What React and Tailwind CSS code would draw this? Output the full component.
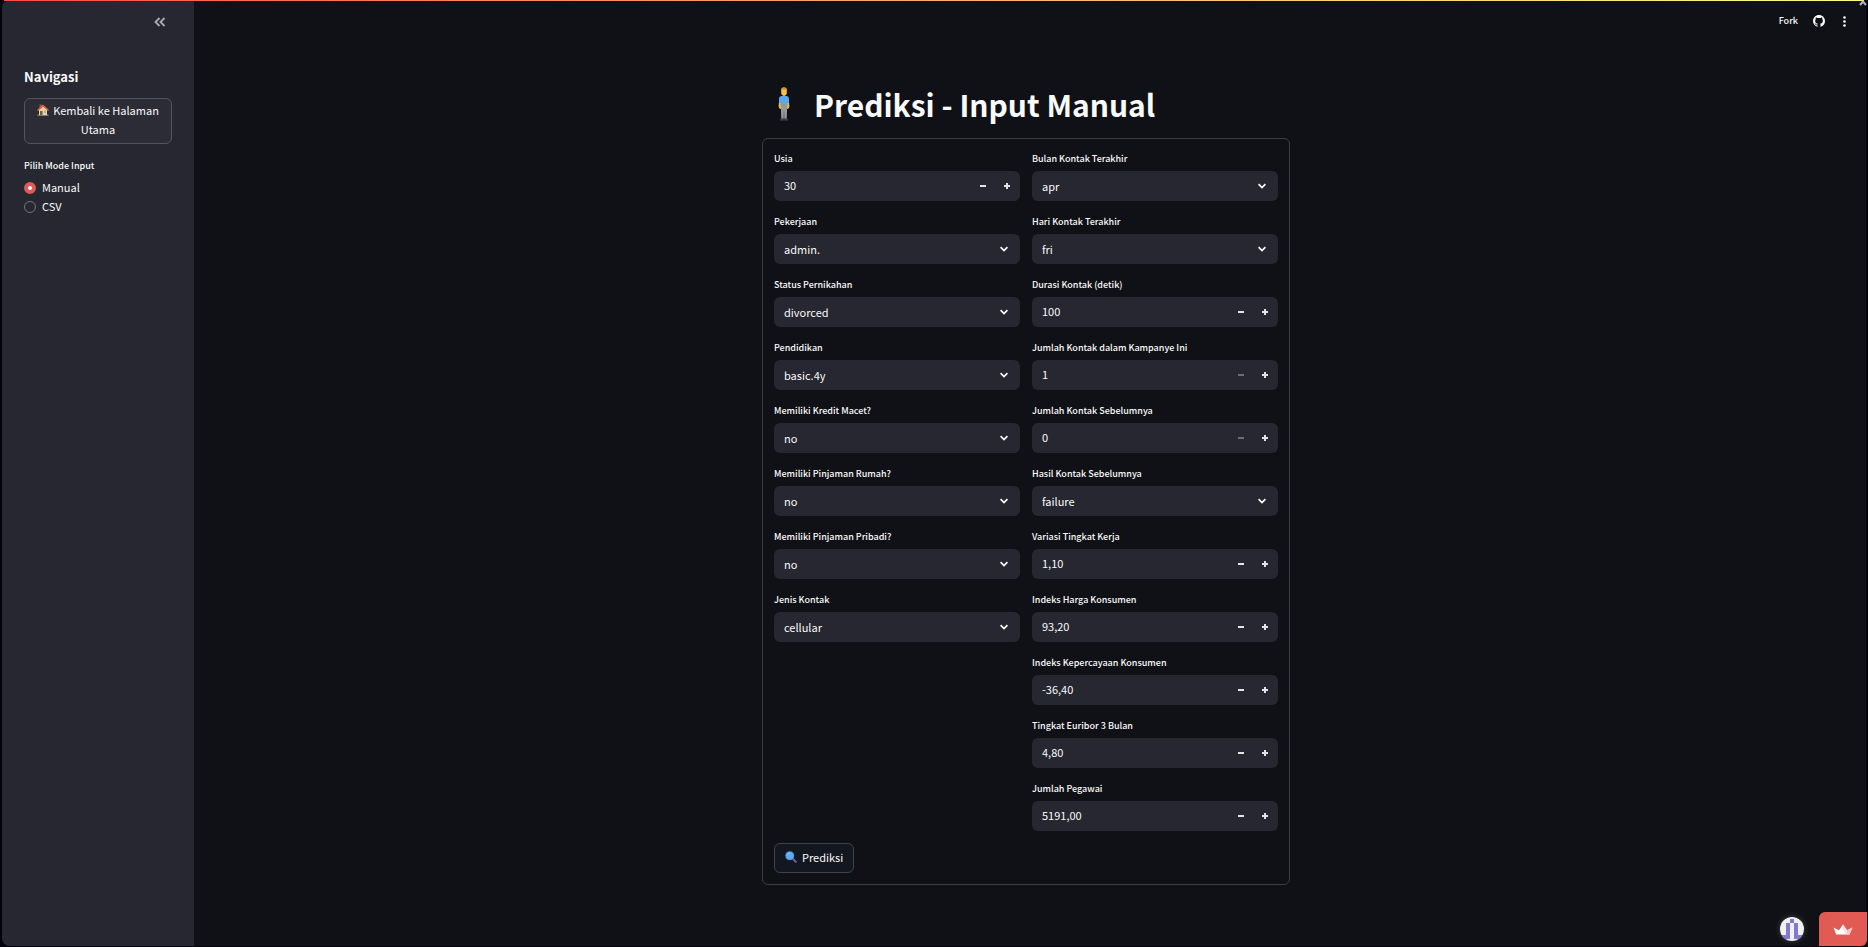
import { useState } from "react";

const leftFields = [
  { id: "usia", label: "Usia", type: "number", value: "30" },
  { id: "pekerjaan", label: "Pekerjaan", type: "select", value: "admin." },
  { id: "status", label: "Status Pernikahan", type: "select", value: "divorced" },
  { id: "pendidikan", label: "Pendidikan", type: "select", value: "basic.4y" },
  { id: "kredit", label: "Memiliki Kredit Macet?", type: "select", value: "no" },
  { id: "rumah", label: "Memiliki Pinjaman Rumah?", type: "select", value: "no" },
  { id: "pribadi", label: "Memiliki Pinjaman Pribadi?", type: "select", value: "no" },
  { id: "jenis", label: "Jenis Kontak", type: "select", value: "cellular" },
];

const rightFields = [
  { id: "bulan", label: "Bulan Kontak Terakhir", type: "select", value: "apr" },
  { id: "hari", label: "Hari Kontak Terakhir", type: "select", value: "fri" },
  { id: "durasi", label: "Durasi Kontak (detik)", type: "number", value: "100" },
  { id: "kampanye", label: "Jumlah Kontak dalam Kampanye Ini", type: "number", value: "1", atMin: true },
  { id: "sebelumnya", label: "Jumlah Kontak Sebelumnya", type: "number", value: "0", atMin: true },
  { id: "hasil", label: "Hasil Kontak Sebelumnya", type: "select", value: "failure" },
  { id: "variasi", label: "Variasi Tingkat Kerja", type: "number", value: "1,10" },
  { id: "harga", label: "Indeks Harga Konsumen", type: "number", value: "93,20" },
  { id: "kepercayaan", label: "Indeks Kepercayaan Konsumen", type: "number", value: "-36,40" },
  { id: "euribor", label: "Tingkat Euribor 3 Bulan", type: "number", value: "4,80" },
  { id: "pegawai", label: "Jumlah Pegawai", type: "number", value: "5191,00" },
];

function HouseIcon() {
  return (
    <svg viewBox="0 0 24 24" className="mr-1 inline-block size-3 align-[-1px]" aria-hidden="true">
      <path d="M1 21h22v3H1z" fill="#4a9a68" />
      <path d="M4 11 12 4l8 7v11H4z" fill="#f2cfa0" />
      <path d="M5 1h4v8H5z" fill="#a35a45" />
      <path d="M12 1 24 12l-2 2L12 5 2 14l-2-2z" fill="#d8683a" />
      <path d="M6 14h5v8H6z" fill="#8a5040" />
      <path d="M14 13h4v5h-4z" fill="#7fb8e6" />
    </svg>
  );
}

function PersonIcon() {
  return (
    <svg viewBox="0 0 12 34" className="h-[34px] w-3" aria-hidden="true">
      <path d="M1 14h2v8H2L.6 20zM9 14h2l.4 6-1.4 2H9z" fill="#efb93e" />
      <path d="M3.2 3.2C3.2 1.200 4.400.5 6 .5s2.800.7 2.800 2.700V6C8.800 7.600 7.500 8.600 6 8.600S3.200 7.600 3.200 6z" fill="#f3c04a" />
      <path d="M3.100 3.600C2.900 1.300 4.300.3 6 .3s3.100 1 2.900 3.300L8 2.600H4z" fill="#c98f2c" />
      <path d="M5 8h2v2H5z" fill="#e0a838" />
      <path d="M3.600 9h4.800c1.600 0 2.600 1 2.600 3v4H9.300v2H2.700v-2H1v-4c0-2 1-3 2.600-3z" fill="#5ba7ea" />
      <path d="M2.800 17.500h6.400L8.700 32H6.300L6 22l-.3 10H3.300z" fill="#98989e" />
      <path d="M5.700 31.500V33.500H2V32.600l1.300-1.100zM6.300 31.500V33.500H10V32.600l-1.300-1.100z" fill="#4b3a63" />
    </svg>
  );
}

function SearchIcon() {
  return (
    <svg viewBox="0 0 24 24" className="size-3" aria-hidden="true">
      <path d="m15 15 6.500 6.500" stroke="#6c5a9c" strokeWidth="4.500" strokeLinecap="round" />
      <circle cx="9.500" cy="9.500" r="9" fill="#4a86d0" />
      <circle cx="9.500" cy="9.500" r="7.500" fill="#5caaf0" />
      <path d="M5 8c.5-2 2-3.300 4-3.500" stroke="#a5d4fb" strokeWidth="1.500" fill="none" strokeLinecap="round" />
    </svg>
  );
}

function Chevron() {
  return (
    <svg viewBox="0 0 8 6" className="pointer-events-none col-start-1 row-start-1 mr-3 h-[6px] w-2 self-center justify-self-end" fill="none" aria-hidden="true">
      <path d="m.6 1.100 3.400 3.400 3.400-3.400" stroke="#fafafa" strokeWidth="1.700" />
    </svg>
  );
}

function SelectField({ field }) {
  return (
    <div className="grid h-[30px] rounded-md bg-[#262730]">
      <select
        id={field.id}
        defaultValue={field.value}
        className="col-start-1 row-start-1 w-full appearance-none rounded-md bg-transparent px-[10px] pb-px text-[11px] leading-[18px] outline-none"
      >
        <option>{field.value}</option>
      </select>
      <Chevron />
    </div>
  );
}

function NumberField({ field }) {
  return (
    <div className="flex h-[30px] overflow-hidden rounded-md bg-[#262730] pr-px">
      <input
        id={field.id}
        type="text"
        inputMode="decimal"
        defaultValue={field.value}
        className="min-w-0 flex-1 bg-transparent px-[10px] pb-[3px] text-[11px] leading-[18px] outline-none"
      />
      <button
        type="button"
        aria-label={"Kurangi " + field.label}
        disabled={field.atMin}
        className="flex w-6 items-center justify-center text-[#e4e4e6] disabled:text-[#6b6c76]"
      >
        <svg viewBox="0 0 6 6" className="size-[6px]" aria-hidden="true">
          <path d="M0 2h6v2H0z" fill="currentColor" />
        </svg>
      </button>
      <button
        type="button"
        aria-label={"Tambah " + field.label}
        className="flex w-6 items-center justify-center text-[#e4e4e6]"
      >
        <svg viewBox="0 0 6 6" className="size-[6px]" aria-hidden="true">
          <path d="M0 2h2V0h2v2h2v2H4v2H2V4H0z" fill="currentColor" />
        </svg>
      </button>
    </div>
  );
}

function Field({ field }) {
  return (
    <div className="flex flex-col">
      <label htmlFor={field.id} className="mb-[3px] h-[18px] text-[9px] leading-[17px] font-medium">
        {field.label}
      </label>
      {field.type === "select" ? <SelectField field={field} /> : <NumberField field={field} />}
    </div>
  );
}

function Sidebar() {
  const [mode, setMode] = useState("Manual");
  return (
    <aside className="flex w-48 shrink-0 flex-col rounded-l-lg bg-[#262730] px-[22px]">
      <div className="flex h-[66px] justify-end pt-4 pr-[6px]">
        <button type="button" aria-label="Tutup sidebar" className="flex h-3 w-3 items-center justify-center">
          <svg viewBox="0 0 12 10" className="h-[10px] w-3" fill="none" aria-hidden="true">
            <path d="M5.500 1 1.500 5l4 4M10.500 1l-4 4 4 4" stroke="#a9aab2" strokeWidth="1.800" />
          </svg>
        </button>
      </div>
      <h2 className="text-[13px] leading-[22px] font-bold">Navigasi</h2>
      <button
        type="button"
        className="mt-[10px] rounded-md border border-[#53545d] bg-[#2b2c36] px-2 pt-[2px] pb-1 text-[11px] leading-[19px]"
      >
        <HouseIcon />
        Kembali ke Halaman Utama
      </button>
      <fieldset className="mt-[14px]">
        <legend className="mb-[5px] text-[9px] leading-[15px] font-medium">Pilih Mode Input</legend>
        {["Manual", "CSV"].map((name) => (
          <label key={name} className="flex h-[19px] items-center gap-[6px] text-[11px] leading-[19px]">
            <input
              type="radio"
              name="mode"
              checked={mode === name}
              onChange={() => setMode(name)}
              className="size-3 appearance-none rounded-full border border-[#73747c] checked:border-4 checked:border-[#e25a54] checked:bg-white"
            />
            {name}
          </label>
        ))}
      </fieldset>
    </aside>
  );
}

function Header() {
  return (
    <header className="flex h-[42px] items-center justify-end self-stretch pr-[19px]">
      <a href="#fork" className="text-[9px] leading-[16px] font-medium">Fork</a>
      <a href="#github" aria-label="GitHub" className="ml-[15px]">
        <svg viewBox="0 0 16 16" className="size-3" fill="#fafafa" aria-hidden="true">
          <path d="M8 0C3.580 0 0 3.580 0 8c0 3.540 2.290 6.530 5.470 7.590.4.070.55-.17.55-.38 0-.19-.01-.82-.01-1.490-2.010.37-2.530-.49-2.690-.94-.09-.23-.48-.94-.82-1.130-.28-.15-.68-.52-.01-.53.63-.01 1.080.58 1.230.82.72 1.210 1.870.87 2.330.66.070-.52.28-.87.51-1.070-1.780-.2-3.640-.89-3.640-3.950 0-.87.31-1.590.82-2.150-.08-.2-.36-1.020.08-2.120 0 0 .67-.21 2.200.82.64-.18 1.320-.27 2-.27s1.360.09 2 .27c1.530-1.040 2.200-.82 2.200-.82.44 1.100.16 1.920.08 2.120.51.56.82 1.270.82 2.150 0 3.070-1.870 3.750-3.650 3.950.29.25.54.73.54 1.480 0 1.070-.01 1.930-.01 2.200 0 .21.15.46.55.38A8.010 8.010 0 0 0 16 8c0-4.420-3.580-8-8-8z" />
        </svg>
      </a>
      <button type="button" aria-label="Menu" className="ml-4 flex w-[6px] justify-center">
        <svg viewBox="0 0 3 11" className="h-[11px] w-[3px]" fill="#fafafa" aria-hidden="true">
          <circle cx="1.500" cy="1.500" r="1.300" />
          <circle cx="1.500" cy="5.500" r="1.300" />
          <circle cx="1.500" cy="9.500" r="1.300" />
        </svg>
      </button>
    </header>
  );
}

function HostBadges() {
  return (
    <div className="fixed right-px bottom-px flex items-center gap-[15px]">
      <a href="#profil" aria-label="Profil pembuat" className="rounded-full shadow-[0_0_6px_rgba(255,255,255,0.2)]">
        <svg viewBox="0 0 24 24" className="size-6 rounded-full" aria-hidden="true">
          <path d="M0 0h24v24H0z" fill="#f0f0f0" />
          <path d="M10 2h4v4h4v12h4v4h-8V6h-4v16H2v-4h4V6h4z" fill="#8377d1" />
        </svg>
      </a>
      <a href="#streamlit" aria-label="Streamlit" className="flex h-[34px] w-12 items-center justify-center rounded-tl-md rounded-br-md bg-[#e25a54]">
        <svg viewBox="0 0 20 11" className="h-[11px] w-5" aria-hidden="true">
          <path d="M.5 3.500 6 6.200 10 .5l4 5.700 5.500-2.700-3 7H3.200z" fill="#fff" />
          <path d="m14 6.200 5.500-2.700-3 7H13z" fill="#f6c4c2" />
          <path d="m10 .5 4 5.700-1 4.300L9.500 6z" fill="#fbe3e2" />
        </svg>
      </a>
    </div>
  );
}

export default function App() {
  return (
    <div className="min-h-screen bg-[#03030f] pr-[2px] pb-px pl-[2px] font-['Noto_Sans_CJK_SC','Source_Sans_3',sans-serif] text-[#fafafa]">
      <div className="flex min-h-[calc(100vh-1px)] rounded-lg bg-[#101116]">
        <Sidebar />
        <div className="flex min-w-0 flex-1 flex-col items-center">
          <Header />
          <main className="w-full max-w-[536px] pt-[37px] pr-2 pb-[61px]">
            <h1 className="flex h-[50px] items-center gap-6 pl-4 text-[30px] leading-[50px] font-bold">
              <PersonIcon />
              Prediksi - Input Manual
            </h1>
            <form onSubmit={(e) => e.preventDefault()} className="mt-[9px] rounded-md border border-[#3d3e45] p-[11px]">
              <div className="grid grid-cols-2 gap-3">
                <div className="flex flex-col gap-3">
                  {leftFields.map((f) => <Field key={f.id} field={f} />)}
                </div>
                <div className="flex flex-col gap-3">
                  {rightFields.map((f) => <Field key={f.id} field={f} />)}
                </div>
              </div>
              <button type="submit" className="mt-3 flex h-[30px] items-center gap-[5px] rounded-md border border-[#41434b] bg-[#131720] px-[10px] pb-[2px] text-[11px] leading-[18px]">
                <SearchIcon />
                Prediksi
              </button>
            </form>
          </main>
        </div>
      </div>
      <div className="absolute inset-x-1 top-0 h-px bg-gradient-to-r from-[#ff4b4b] to-[#fffd80]" />
      <svg viewBox="0 0 8 6" className="absolute top-0 right-px h-[6px] w-2" fill="none" aria-hidden="true">
        <path d="m1 5 3-3.500L7 5" stroke="#b5b5ba" strokeWidth="2" />
      </svg>
      <HostBadges />
    </div>
  );
}
